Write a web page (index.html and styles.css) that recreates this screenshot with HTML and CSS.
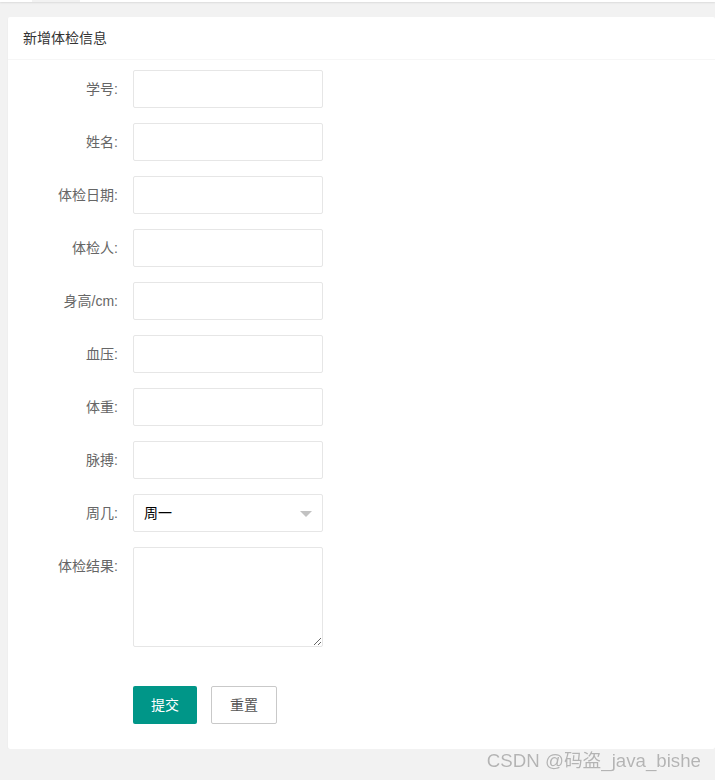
FILE: index.html
```html
<!DOCTYPE html>
<html lang="zh-CN">
<head>
  <meta charset="UTF-8" />
  <meta name="viewport" content="width=device-width, initial-scale=1.0" />
  <title>新增体检信息</title>
  <link rel="stylesheet" href="styles.css">
</head>
<body>
  <div class="tabbar">
    <span class="tab"></span>
  </div>
  <div class="wrap">
    <div class="card">
      <div class="card-header">新增体检信息</div>
      <form class="card-body">
        <div class="form-item">
          <label class="form-label">学号:</label>
          <div class="input-inline"><input class="input" type="text" /></div>
        </div>
        <div class="form-item">
          <label class="form-label">姓名:</label>
          <div class="input-inline"><input class="input" type="text" /></div>
        </div>
        <div class="form-item">
          <label class="form-label">体检日期:</label>
          <div class="input-inline"><input class="input" type="text" /></div>
        </div>
        <div class="form-item">
          <label class="form-label">体检人:</label>
          <div class="input-inline"><input class="input" type="text" /></div>
        </div>
        <div class="form-item">
          <label class="form-label">身高/cm:</label>
          <div class="input-inline"><input class="input" type="text" /></div>
        </div>
        <div class="form-item">
          <label class="form-label">血压:</label>
          <div class="input-inline"><input class="input" type="text" /></div>
        </div>
        <div class="form-item">
          <label class="form-label">体重:</label>
          <div class="input-inline"><input class="input" type="text" /></div>
        </div>
        <div class="form-item">
          <label class="form-label">脉搏:</label>
          <div class="input-inline"><input class="input" type="text" /></div>
        </div>
        <div class="form-item">
          <label class="form-label">周几:</label>
          <div class="input-inline">
            <div class="select">
              <span>周一</span>
              <i class="edge"></i>
            </div>
          </div>
        </div>
        <div class="form-item">
          <label class="form-label">体检结果:</label>
          <div class="input-inline"><textarea class="textarea"></textarea></div>
        </div>
        <div class="form-item btn-row">
          <div class="input-inline">
            <button type="button" class="btn">提交</button>
            <button type="reset" class="btn btn-primary">重置</button>
          </div>
        </div>
      </form>
    </div>
  </div>
  <div class="watermark">CSDN @码盗_java_bishe</div>
</body>
</html>
```

FILE: styles.css
```css
body {
  margin: 0;
  padding: 0;
  background-color: #f2f2f2;
  font-family: "Microsoft YaHei", "Liberation Sans", "Noto Sans CJK SC", sans-serif;
  font-size: 14px;
  color: #333;
}
.tabbar {
  height: 2px;
  background-color: #fff;
  box-shadow: 0 1px 2px rgba(0, 0, 0, 0.1);
  position: relative;
}
.tabbar .tab {
  display: block;
  margin-left: 32px;
  width: 48px;
  height: 2px;
  background-color: #f2f2f2;
}
.wrap {
  padding: 15px 0 0 8px;
}
.card {
  background-color: #fff;
  border-radius: 2px;
  box-shadow: 0 1px 2px 0 rgba(0, 0, 0, 0.05);
}
.card-header {
  height: 42px;
  line-height: 42px;
  padding: 0 15px;
  border-bottom: 1px solid #f6f6f6;
  color: #333;
  font-size: 14px;
}
.card-body {
  padding: 10px 15px;
}
.form-item {
  display: flex;
  margin-bottom: 15px;
}
.form-label {
  width: 80px;
  padding: 9px 15px;
  line-height: 20px;
  text-align: right;
  color: #666;
}
.input-inline {
  width: 190px;
}
.input,
.textarea,
.select {
  box-sizing: border-box;
  width: 190px;
  height: 38px;
  border: 1px solid #e6e6e6;
  border-radius: 2px;
  background-color: #fff;
  padding-left: 10px;
  font-family: inherit;
  font-size: 14px;
  display: block;
  margin: 0;
  outline: none;
}
.textarea {
  height: 100px;
  min-height: 100px;
  padding: 6px 10px;
  resize: vertical;
}
.select {
  position: relative;
  line-height: 36px;
  color: #000;
}
.select .edge {
  position: absolute;
  right: 10px;
  top: 16px;
  width: 0;
  height: 0;
  border-top: 6px solid #c2c2c2;
  border-left: 6px solid transparent;
  border-right: 6px solid transparent;
}
.btn-row {
  padding-top: 24px;
  padding-left: 110px;
}
.btn-row .input-inline {
  width: auto;
  display: flex;
  gap: 14px;
}
.btn {
  height: 38px;
  line-height: 38px;
  padding: 0 18px;
  background-color: #009688;
  color: #fff;
  border: none;
  border-radius: 2px;
  font-family: inherit;
  font-size: 14px;
  cursor: pointer;
}
.btn-primary {
  background-color: #fff;
  color: #555;
  border: 1px solid #c9c9c9;
  line-height: 36px;
}
.watermark {
  position: fixed;
  right: 14px;
  bottom: 8px;
  font-size: 18.7px;
  color: #b4b4b4;
  text-shadow: 0 0 1px #fff;
  font-family: "Liberation Sans", "Noto Sans CJK SC", sans-serif;
}
```
